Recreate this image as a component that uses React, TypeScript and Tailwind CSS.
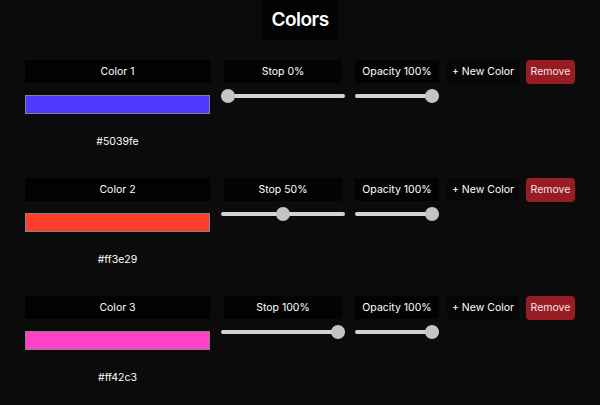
import React from "react";

type Row = { name: string; hex: string; stop: number; opacity: number };

const rows: Row[] = [
  { name: "Color 1", hex: "#5039fe", stop: 0, opacity: 100 },
  { name: "Color 2", hex: "#ff3e29", stop: 50, opacity: 100 },
  { name: "Color 3", hex: "#ff42c3", stop: 100, opacity: 100 },
];

function Slider({ value }: { value: number }) {
  return (
    <div className="relative h-[14px] w-full">
      <div className="absolute left-0 right-0 top-[5px] h-[4px] rounded-full bg-[#d4d4d4]" />
      <div
        className="absolute top-0 h-[14px] w-[14px] rounded-full bg-[#c4c4c4]"
        style={{ left: `calc(${value}% - ${(value / 100) * 14}px)` }}
      />
    </div>
  );
}

export default function App() {
  return (
    <div
      className="w-[600px] h-[405px] bg-[#0b0b0c] text-white overflow-hidden"
      style={{ fontFamily: "Inter, 'Noto Sans', sans-serif" }}
    >
      <div className="flex justify-center">
        <div className="h-[40px] px-[9px] bg-[#030303] flex items-center text-[19px] font-semibold tracking-tight">
          Colors
        </div>
      </div>
      <div className="mt-[20px] flex flex-col gap-[30px] pl-[25px]">
        {rows.map((r) => (
          <div key={r.name} className="flex items-start h-[88px]">
            <div className="w-[185px] flex flex-col">
              <div className="h-[23px] pt-[1px] bg-[#020202] flex items-center justify-center text-[10.5px]">
                {r.name}
              </div>
              <div
                className="mt-[12px] h-[19px] border border-[#8a7c9a]"
                style={{ backgroundColor: r.hex }}
              />
              <div className="mt-[20px] text-center text-[10.5px] leading-[15px]">{r.hex}</div>
            </div>
            <div className="ml-[11px] w-[124px] flex flex-col">
              <div className="h-[23px] pt-[1px] mx-[3px] bg-[#030303] flex items-center justify-center text-[10.5px]">
                Stop {r.stop}%
              </div>
              <div className="mt-[6px]">
                <Slider value={r.stop} />
              </div>
            </div>
            <div className="ml-[10px] w-[84px] flex flex-col">
              <div className="h-[23px] pt-[1px] bg-[#030303] flex items-center justify-center text-[10.5px]">
                Opacity {r.opacity}%
              </div>
              <div className="mt-[6px]">
                <Slider value={r.opacity} />
              </div>
            </div>
            <div className="ml-[8px] h-[23px] pt-[1px] w-[72px] bg-[#060606] flex items-center justify-center text-[10.5px]">
              + New Color
            </div>
            <div className="ml-[7px] h-[24px] w-[49px] rounded-[4px] bg-[#971c24] flex items-center justify-center text-[10.5px] text-[#f7e4e4]">
              Remove
            </div>
          </div>
        ))}
      </div>
    </div>
  );
}
